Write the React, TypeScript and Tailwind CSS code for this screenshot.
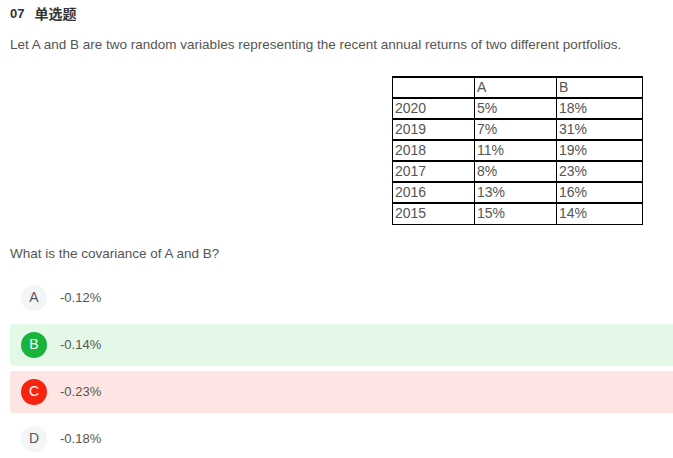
import React from "react";

const rows = [
  ["2020", "5%", "18%"],
  ["2019", "7%", "31%"],
  ["2018", "11%", "19%"],
  ["2017", "8%", "23%"],
  ["2016", "13%", "16%"],
  ["2015", "15%", "14%"],
];

const options = [
  { k: "A", v: "-0.12%", state: "none" },
  { k: "B", v: "-0.14%", state: "right" },
  { k: "C", v: "-0.23%", state: "wrong" },
  { k: "D", v: "-0.18%", state: "none" },
];

export default function App() {
  const cell =
    "border-x border-t-2 border-b border-black p-0 pl-[2px] h-[21px] leading-[17px] align-middle text-left font-normal";
  return (
    <div
      className="w-[673px] h-[458px] overflow-hidden bg-white pl-[10px] pt-[4px] text-[#555]"
      style={{ fontFamily: '"Liberation Sans", Arial, "Noto Sans CJK SC", sans-serif' }}
    >
      <div className="h-[20px] leading-[20px] flex items-center font-bold text-[#333]">
        <span className="text-[13px]">07</span>
        <span className="ml-[10px] text-[14px]">单选题</span>
      </div>
      <p className="mt-[11px] text-[13.5px] leading-[20px]">
        Let A and B are two random variables representing the recent annual returns of two different portfolios.
      </p>
      <div className="mt-[21px] flex justify-end pr-[30px]">
        <table className="border-collapse text-[14px] text-[#555]">
          <tbody>
            <tr>
              <td className={`${cell} w-[82px]`}></td>
              <td className={`${cell} w-[82px]`}>A</td>
              <td className={`${cell} w-[86px]`}>B</td>
            </tr>
            {rows.map((r) => (
              <tr key={r[0]}>
                {r.map((c, i) => (
                  <td key={i} className={cell}>
                    {c}
                  </td>
                ))}
              </tr>
            ))}
          </tbody>
        </table>
      </div>
      <p className="mt-[19px] text-[13.5px] leading-[20px]">What is the covariance of A and B?</p>
      <div className="mt-[13px] flex flex-col gap-[5px]">
        {options.map((o) => {
          const bg =
            o.state === "right"
              ? "bg-[#e3f8e6]"
              : o.state === "wrong"
              ? "bg-[#fde5e3]"
              : "bg-white";
          const circle =
            o.state === "right"
              ? "bg-[#17b33b] text-white"
              : o.state === "wrong"
              ? "bg-[#f5230f] text-white"
              : "bg-[#f4f5f7] text-[#555]";
          return (
            <div
              key={o.k}
              className={`h-[42px] w-[680px] rounded-l-[4px] flex items-center pl-[11px] ${bg}`}
            >
              <div
                className={`w-[26px] h-[26px] rounded-full flex items-center justify-center text-[14px] ${circle}`}
              >
                {o.k}
              </div>
              <span className="ml-[13px] text-[13px]">{o.v}</span>
            </div>
          );
        })}
      </div>
    </div>
  );
}
